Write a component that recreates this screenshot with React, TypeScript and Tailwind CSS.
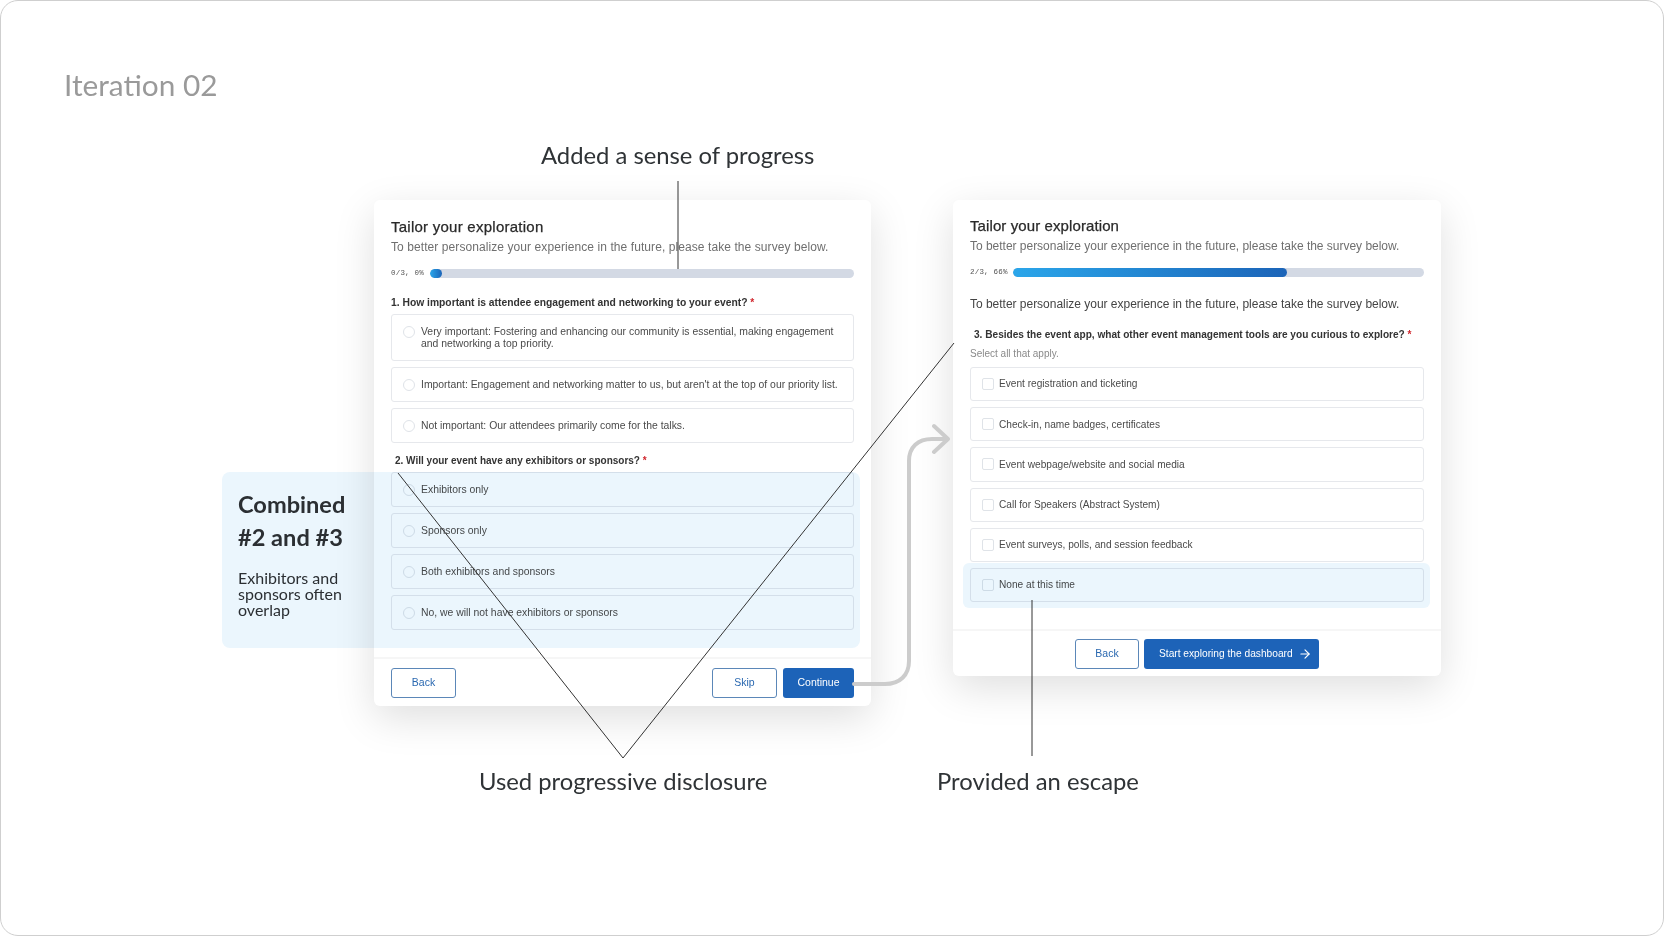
import { ArrowRight } from "lucide-react";

const Q1 = [
  "Important: Engagement and networking matter to us, but aren't at the top of our priority list.",
  "Not important: Our attendees primarily come for the talks.",
];

const Q2 = [
  "Exhibitors only",
  "Sponsors only",
  "Both exhibitors and sponsors",
  "No, we will not have exhibitors or sponsors",
];

const Q3 = [
  "Event registration and ticketing",
  "Check-in, name badges, certificates",
  "Event webpage/website and social media",
  "Call for Speakers (Abstract System)",
  "Event surveys, polls, and session feedback",
  "None at this time",
];

function Radio() {
  return <span className="h-[12px] w-[12px] shrink-0 rounded-full border border-[#dfe3e8] bg-white" />;
}

function Check() {
  return <span className="h-[12px] w-[12px] shrink-0 rounded-[2px] border border-[#dfe3e8] bg-white" />;
}

function Progress({ label, labelWidth, fill }: { label: string; labelWidth: string; fill: number }) {
  return (
    <div className="flex h-[9px] items-center">
      <span className={`${labelWidth} shrink-0 whitespace-nowrap font-['Liberation_Mono',monospace] text-[7.5px] tracking-[0.2px] text-[#555]`}>
        {label}
      </span>
      <div className="h-[9px] flex-1 overflow-hidden rounded-full bg-[#d3d9e4]">
        <div
          className="h-full rounded-full bg-gradient-to-r from-[#2ba6ea] to-[#1c64b8]"
          style={{ width: fill }}
        />
      </div>
    </div>
  );
}

function Title({ className }: { className: string }) {
  return (
    <h2 className={`text-[15px] leading-[20px] text-[#2a2a2a] [-webkit-text-stroke:0.25px_#2a2a2a] ${className}`}>
      Tailor your exploration
    </h2>
  );
}

function Question({ children, className }: { children: string; className: string }) {
  return (
    <p className={`whitespace-nowrap font-bold leading-[14px] text-[#333] ${className}`}>
      {children} <span className="text-[#d0262d]">*</span>
    </p>
  );
}

function Option({ text, className, kind }: { text: string; className: string; kind: "radio" | "check" }) {
  return (
    <div className={`flex items-center rounded-[3px] border border-[#e6e8ec] pl-[11px] text-[#4a4a4a] ${className}`}>
      {kind === "radio" ? <Radio /> : <Check />}
      <span className="whitespace-nowrap">{text}</span>
    </div>
  );
}

function Survey1() {
  return (
    <section className="h-[506px] w-[497px] shrink-0 rounded-[6px] bg-white shadow-[0_12px_40px_rgba(0,0,0,0.13)]">
      <div className="h-[457px] px-[17px] pt-[17px]">
        <Title className="tracking-[0.25px]" />
        <p className="whitespace-nowrap text-[12px] leading-[20px] tracking-[0.08px] text-[#6f6f6f]">
          To better personalize your experience in the future, please take the survey below.
        </p>
        <div className="mt-[12px]">
          <Progress label="0/3, 0%" labelWidth="w-[39px]" fill={12} />
        </div>
        <Question className="mt-[18px] text-[10.3px]">1. How important is attendee engagement and networking to your event?</Question>
        <div className="mt-[4px] flex flex-col gap-[6px]">
          <div className="flex h-[47px] items-start gap-[6px] rounded-[3px] border border-[#e6e8ec] pl-[11px] pt-[11px] text-[10.4px] leading-[11.5px] text-[#4a4a4a]">
            <Radio />
            <span className="w-[430px]">
              Very important: Fostering and enhancing our community is essential, making engagement and networking a top priority.
            </span>
          </div>
          {Q1.map((t) => (
            <Option key={t} text={t} className="h-[35px] gap-[6px] text-[10.4px]" kind="radio" />
          ))}
        </div>
        <Question className="mt-[11px] pl-[4px] text-[10px]">2. Will your event have any exhibitors or sponsors?</Question>
        <div className="mt-[4px] flex flex-col gap-[6px]">
          {Q2.map((t) => (
            <Option key={t} text={t} className="h-[35px] gap-[6px] text-[10.4px]" kind="radio" />
          ))}
        </div>
      </div>
      <div className="flex justify-between border-t-2 border-[#f6f6f6] px-[17px] pt-[9px]">
        <button className="h-[30px] w-[65px] rounded-[3px] border border-[#5b87b8] text-[10.5px] text-[#2a68b0]">Back</button>
        <div className="flex gap-[6px]">
          <button className="h-[30px] w-[65px] rounded-[3px] border border-[#5b87b8] text-[10.5px] text-[#2a68b0]">Skip</button>
          <button className="h-[30px] w-[71px] rounded-[3px] bg-[#1d63b8] text-[10.5px] text-white">Continue</button>
        </div>
      </div>
    </section>
  );
}

function Survey2() {
  return (
    <section className="h-[476px] w-[488px] shrink-0 rounded-[6px] bg-white shadow-[0_12px_40px_rgba(0,0,0,0.13)]">
      <div className="h-[429px] px-[17px] pt-[16px]">
        <Title className="tracking-[0.1px]" />
        <p className="whitespace-nowrap text-[12px] leading-[20px] tracking-[-0.02px] text-[#6f6f6f]">
          To better personalize your experience in the future, please take the survey below.
        </p>
        <div className="mt-[12px]">
          <Progress label="2/3, 66%" labelWidth="w-[43px]" fill={274} />
        </div>
        <p className="mt-[17px] whitespace-nowrap text-[12px] leading-[20px] tracking-[-0.02px] text-[#444]">
          To better personalize your experience in the future, please take the survey below.
        </p>
        <Question className="mt-[14px] pl-[4px] text-[10.1px]">3. Besides the event app, what other event management tools are you curious to explore?</Question>
        <p className="mt-[5px] text-[10px] leading-[14px] text-[#8a8a8a]">Select all that apply.</p>
        <div className="mt-[6px] flex flex-col gap-[6px]">
          {Q3.map((t) => (
            <Option key={t} text={t} className="h-[34.2px] gap-[5px] text-[10.15px]" kind="check" />
          ))}
        </div>
      </div>
      <div className="flex justify-center gap-[5px] border-t-2 border-[#f6f6f6] pt-[8px]">
        <button className="h-[30px] w-[64px] rounded-[3px] border border-[#5b87b8] text-[10.5px] text-[#2a68b0]">Back</button>
        <button className="flex h-[30px] w-[175px] items-center gap-[5px] rounded-[3px] bg-[#1d63b8] pl-[15px] text-[10.2px] text-white">
          Start exploring the dashboard
          <ArrowRight size={14} strokeWidth={2} />
        </button>
      </div>
    </section>
  );
}

export default function App() {
  return (
    <div className="relative h-[936px] w-[1664px] overflow-hidden rounded-[18px] border border-[#cfcfcf] bg-white font-['Liberation_Sans',sans-serif]">
      <h1 className="ml-[63px] mt-[64px] font-['Lato',sans-serif] text-[29.8px] leading-[40px] text-[#9a9a9a]">Iteration 02</h1>

      <div className="ml-[373px] mt-[95px] flex items-start gap-[82px]">
        <Survey1 />
        <Survey2 />
      </div>

      {/* highlight over the second question, multiply keeps the form text dark */}
      <div className="absolute left-[221px] top-[471px] h-[176px] w-[638px] rounded-[8px] bg-[#ebf6fd] pl-[16px] pt-[16px] font-['Lato',sans-serif] text-[#2b2f33] mix-blend-multiply">
        <p className="text-[23.6px] font-bold leading-[33px]">Combined<br />#2 and #3</p>
        <p className="mt-[16px] text-[16px] leading-[16px]">Exhibitors and<br />sponsors often<br />overlap</p>
      </div>
      <div className="absolute left-[962px] top-[562px] h-[45px] w-[467px] rounded-[6px] bg-[#ebf6fd] mix-blend-multiply" />

      {/* annotations */}
      <svg className="pointer-events-none absolute left-0 top-0" width="1664" height="936" fill="none">
        <path d="M677 180V268" stroke="#333" strokeWidth="1" />
        <path d="M397 472L622 757L953 342" stroke="#333" strokeWidth="1" />
        <path d="M1031 599V755" stroke="#333" strokeWidth="1" />
        <path d="M853 683H884C899 683 908 674 908 660V460C908 446 917 438 931 438H947M933 425L947 438L933 451" stroke="#cccccc" strokeWidth="4" strokeLinecap="round" strokeLinejoin="round" />
      </svg>
      <p className="absolute left-[540px] top-[138px] font-['Lato',sans-serif] text-[23.8px] leading-[32px] text-[#2f3336]">Added a sense of progress</p>
      <p className="absolute left-[478px] top-[764px] font-['Lato',sans-serif] text-[23.8px] leading-[32px] text-[#2f3336]">Used progressive disclosure</p>
      <p className="absolute left-[936px] top-[764px] font-['Lato',sans-serif] text-[23.8px] leading-[32px] text-[#2f3336]">Provided an escape</p>
    </div>
  );
}
